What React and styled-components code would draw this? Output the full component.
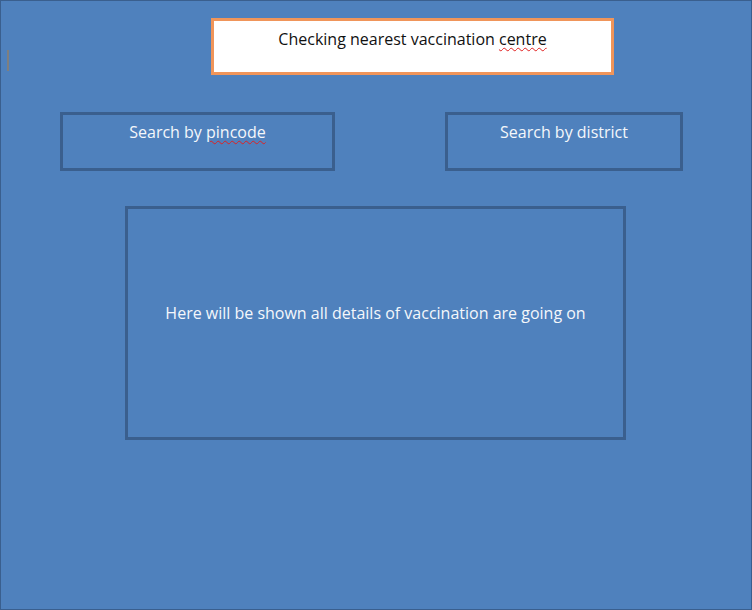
import React from "react";
import styled, { createGlobalStyle } from "styled-components";

const Global = createGlobalStyle`
  html, body { margin: 0; padding: 0; background: #4f81bd; }
  * { box-sizing: border-box; }
`;

const Page = styled.div`
  width: 752px;
  height: 610px;
  background: #4f81bd;
  border: 1px solid #3a5f8e;
  padding-top: 17px;
  font-family: "Open Sans", "Lato", sans-serif;
  display: flex;
  flex-direction: column;
`;

const Header = styled.div`
  display: flex;
  align-items: flex-start;
`;

const Caret = styled.div`
  width: 2px;
  height: 21px;
  margin-left: 6px;
  margin-top: 32px;
  background: #7f7f7f;
`;

const TitleBox = styled.div`
  margin-left: 202px;
  width: 403px;
  height: 57px;
  background: #ffffff;
  border: 3px solid #f0955a;
  padding-top: 8px;
  text-align: center;
  font-size: 16px;
  line-height: 20px;
  color: #111;
`;

const Misspelled = styled.span`
  text-decoration: underline wavy #e02020;
  text-decoration-thickness: 1px;
  text-underline-offset: 2px;
`;

const SearchRow = styled.div`
  display: flex;
  margin-top: 37px;
  padding-left: 59px;
`;

const SearchBox = styled.div`
  width: ${(p) => p.$w}px;
  margin-left: ${(p) => p.$gap || 0}px;
  height: 59px;
  border: 3px solid #3a5f8e;
  padding-top: 7px;
  text-align: center;
  color: #f4f7fb;
  font-size: 16px;
  line-height: 20px;
`;

const DetailsBox = styled.div`
  margin-top: 35px;
  margin-left: 124px;
  width: 501px;
  height: 234px;
  border: 3px solid #3a5f8e;
  display: flex;
  align-items: center;
  justify-content: center;
  padding-bottom: 20px;
  color: #f4f7fb;
  font-size: 16px;
  line-height: 20px;
`;

export default function App() {
  return (
    <>
      <Global />
      <Page>
        <Header>
          <Caret />
          <TitleBox>
            Checking nearest vaccination <Misspelled>centre</Misspelled>
          </TitleBox>
        </Header>
        <SearchRow>
          <SearchBox $w={275}>
            Search by <Misspelled>pincode</Misspelled>
          </SearchBox>
          <SearchBox $w={238} $gap={110}>
            Search by district
          </SearchBox>
        </SearchRow>
        <DetailsBox>Here will be shown all details of vaccination are going on</DetailsBox>
      </Page>
    </>
  );
}
